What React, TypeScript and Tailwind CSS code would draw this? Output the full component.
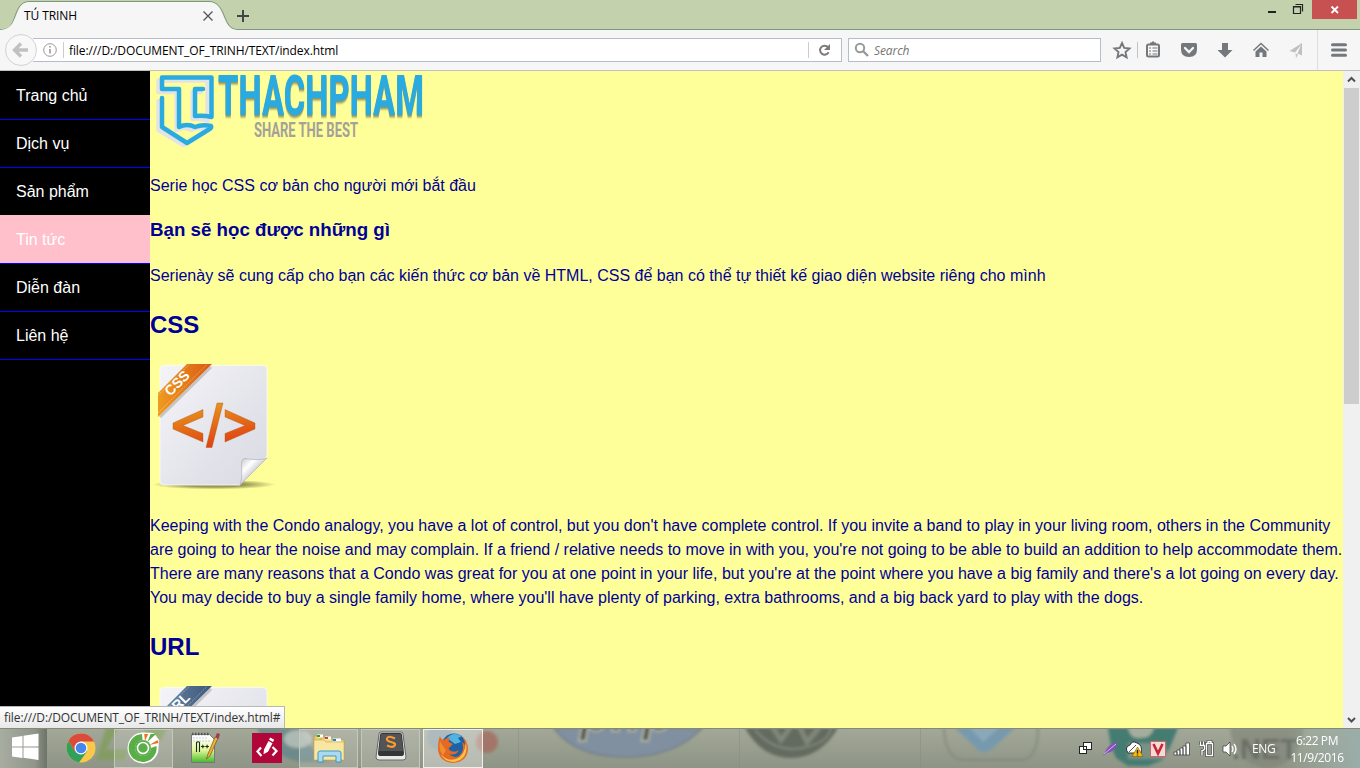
import React from "react";

const UI = "font-['Open_Sans','Noto_Sans',sans-serif]";

function TabStrip() {
  return (
    <div className="relative h-[30px] bg-[#c4d1ad] flex">
      <svg className="absolute inset-0" width="1360" height="30" viewBox="0 0 1360 30">
        <path d="M0 29.5H3C18 29 12 2 29 1.5H209C227 2 222 29 237 29.5H1360" fill="none" stroke="#7f9680" />
        <path d="M0 30C20 29.5 13 2.5 29 2H209C226 2.500 221 29.500 237 30Z" fill="#f6f6f6" />
        <path d="M203.500 11.500l9 9M212.500 11.500l-9 9" stroke="#555" strokeWidth="1.3" />
        <path d="M237 16h12M243 10v12" stroke="#444" strokeWidth="2" />
        <rect x="1268" y="11" width="8" height="2" fill="#222" />
        <path d="M1293.500 6.500h7v7h-7zM1293 7h8M1295.500 4.500h7v7" fill="none" stroke="#222" strokeWidth="1.200" />
        <rect x="1312" y="0" width="45" height="19" fill="#c75050" />
        <path d="M1331.500 6.500l6.500 6.500M1338 6.500l-6.500 6.500" stroke="#fff" strokeWidth="1.800" />
      </svg>
      <span className={"relative pl-6 pt-[7px] text-[12px] leading-[18px] tracking-[-0.1px] text-black whitespace-nowrap " + UI}>TÚ TRINH</span>
    </div>
  );
}

function ToolbarIcons() {
  return (
    <svg width="259" height="40" viewBox="1101 30 259 40" className="shrink-0">
      <path d="M1122 43l2.200 4.900 5.300.6-4 3.600 1.100 5.300-4.600-2.700-4.600 2.700 1.100-5.300-4-3.600 5.300-.6z" fill="none" stroke="#74787c" strokeWidth="1.900" />
      <path d="M1137.500 42v16" stroke="#c4c4c4" />
      <path d="M1148.500 44.500h9q1.500 0 1.500 1.500v9q0 1.500-1.500 1.500h-9q-1.500 0-1.500-1.500v-9q0-1.500 1.500-1.500z" fill="none" stroke="#74787c" strokeWidth="2" />
      <path d="M1150 44v-1.500h1.500l1.500-1.500 1.500 1.500h1.500V44z" fill="#74787c" />
      <path d="M1149 48h2M1152.500 48h5M1149 51h2M1152.500 51h5M1149 54h2M1152.500 54h5" stroke="#74787c" strokeWidth="1.200" />
      <path d="M1182.500 43h13q1.500 0 1.500 1.500v5q0 7.500-8 7.500t-8-7.500v-5q0-1.500 1.500-1.500z" fill="#74787c" />
      <path d="M1185 48l4 4 4-4" fill="none" stroke="#f6f6f6" strokeWidth="2.300" strokeLinecap="round" />
      <path d="M1222 43h6v7h4.500l-7.500 7.500-7.500-7.500h4.500z" fill="#74787c" />
      <path d="M1253.500 50.500l7.500-7 7.500 7" fill="none" stroke="#74787c" strokeWidth="1.500" />
      <path d="M1261 46.500l5.500 5v5.500h-4v-4.500h-3v4.500h-4v-5.500z" fill="#74787c" />
      <path d="M1302 43v12.500l-4.500-2L1301 45l-6 7.500-5.500-1.500zM1295.500 53.500l2.500 1-2 3.500z" fill="#bfc0c2" />
      <path d="M1317.500 30v40" stroke="#dedede" />
      <path d="M1332.500 44.800h13M1332.500 50h13M1332.500 55.200h13" stroke="#74787c" strokeWidth="3" strokeLinecap="round" />
    </svg>
  );
}

function Toolbar() {
  return (
    <div className="h-[41px] bg-[#f6f6f6] border-b border-[#c1c1c1] flex items-center">
      <svg width="38" height="40" viewBox="0 30 38 40" className="relative z-10 -mr-[5px] shrink-0">
        <circle cx="21" cy="50" r="15.500" fill="#f8f8f8" stroke="#d3d3d6" />
        <path d="M28 50H16M21 43.500l-6.500 6.500 6.500 6.500" fill="none" stroke="#c1c1c3" strokeWidth="3.400" />
      </svg>
      <div className="w-[809px] h-6 bg-white border border-[#b5bdc9] border-l-0 flex items-center shrink-0">
        <svg width="36" height="22" viewBox="33 39 36 22" className="shrink-0">
          <circle cx="50" cy="50" r="6.300" fill="none" stroke="#999" />
          <path d="M50 49v4.500M50 46v1.600" stroke="#999" strokeWidth="1.600" />
          <path d="M63.500 42v16" stroke="#ccc" />
        </svg>
        <span className={"text-[12px] leading-[18px] w-[739px] pt-px tracking-[-0.1px] text-black whitespace-nowrap " + UI}>file:///D:/DOCUMENT_OF_TRINH/TEXT/index.html</span>
        <svg width="33" height="22" viewBox="808 39 33 22" className="shrink-0">
          <path d="M808.500 42v16" stroke="#ccc" />
          <path d="M828 47.200a4.500 4.500 0 1 0 .6 5" fill="none" stroke="#7b7b7b" strokeWidth="2" />
          <path d="M830 44v6h-6z" fill="#7b7b7b" />
        </svg>
      </div>
      <div className="ml-1.5 w-[253px] h-6 bg-white border border-[#b5bdc9] flex items-center shrink-0">
        <svg width="25" height="22" viewBox="849 39 25 22" className="shrink-0">
          <circle cx="860" cy="48" r="4.200" fill="none" stroke="#999" strokeWidth="2" />
          <path d="M863 51l5 5" stroke="#999" strokeWidth="2.400" />
        </svg>
        <span className={"text-[12px] leading-[18px] pt-px italic text-[#757575] tracking-[-0.1px] " + UI}>Search</span>
      </div>
      <ToolbarIcons />
    </div>
  );
}

const MENU = ["Trang chủ", "Dịch vụ", "Sản phẩm", "Tin tức", "Diễn đàn", "Liên hệ"];

function Sidebar() {
  return (
    <ul className="w-[150px] bg-black shrink-0 text-white text-[16px]">
      {MENU.map((m, i) => (
        <li
          key={m}
          className={
            i === 3
              ? "h-[49px] -mt-px pt-px border-b border-[#0000ff] bg-[#ffc0cb] pl-4 leading-[48px]"
              : i === 0
                ? "h-[49px] border-b border-[#0000ff] pl-4 leading-[49px]"
                : "h-12 border-b border-[#0000ff] pl-4 leading-[48px]"
          }
        >
          {m}
        </li>
      ))}
    </ul>
  );
}

function Logo() {
  return (
    <svg width="290" height="79" viewBox="150 71 290 79" className="block">
      <g fill="none" strokeLinejoin="round" strokeLinecap="round" strokeWidth="4.500">
        <path d="M204 89H196V116Q204 115 211 118V77.500H162V89H180V127Q187 123 195 127 202 123 211 127L187 142 162 127V98" stroke="#e3e3e3" transform="translate(-3.500 3)" />
        <path d="M203 89H195V116Q204 115 211.500 117V77.500H162V89H179V127Q187 123 195 127 202 124 211 126 212 128 208 130L187 143 162 127V98" stroke="#29abe2" />
      </g>
      <g fontFamily="Roboto, 'Liberation Sans', sans-serif">
        <text className="[filter:drop-shadow(0px_1px_0.5px_rgba(110,110,70,0.75))]" transform="translate(218 114.500) scale(1 2.300)" fontSize="24" fontWeight="800" textLength="206" lengthAdjust="spacingAndGlyphs" fill="#29abe2">THACHPHAM</text>
        <text x="254" y="137" fontSize="21" fontWeight="700" textLength="104" lengthAdjust="spacingAndGlyphs" fill="#a5a19a">SHARE THE BEST</text>
      </g>
    </svg>
  );
}

function FileIcon({ id, label, from, to, code }: { id: string; label: string; from: string; to: string; code?: boolean }) {
  return (
    <svg width="128" height="128" viewBox="0 0 128 128" className="block">
      <defs>
        <linearGradient id={id + "p"} x1="0" y1="0" x2="1" y2="1">
          <stop offset="0" stopColor="#f4f4f8" />
          <stop offset="1" stopColor="#d8d9e2" />
        </linearGradient>
        <linearGradient id={id + "r"} x1="0" y1="0" x2="1" y2="0">
          <stop offset="0" stopColor={from} />
          <stop offset="1" stopColor={to} />
        </linearGradient>
        <linearGradient id={id + "c"} x1="0" y1="0" x2=".3" y2="1">
          <stop offset="0" stopColor="#eaa11d" />
          <stop offset="1" stopColor="#e04412" />
        </linearGradient>
        <linearGradient id={id + "f"} x1="0" y1="0" x2="1" y2="1">
          <stop offset="0" stopColor="#bfc0c6" />
          <stop offset=".3" stopColor="#ffffff" />
          <stop offset=".55" stopColor="#c9cad0" />
        </linearGradient>
        <radialGradient id={id + "s"}>
          <stop offset=".5" stopColor="#77773c" stopOpacity=".75" />
          <stop offset="1" stopColor="#77773c" stopOpacity="0" />
        </radialGradient>
      </defs>
      <ellipse cx="64" cy="122.500" rx="62" ry="5" fill={`url(#${id}s)`} />
      <path d="M14 3.500H113Q117 3.500 117 7.500V94L90 123H14Q10 123 10 119V7.500Q10 3.500 14 3.500Z" fill={`url(#${id}p)`} stroke="#fafaff" strokeWidth=".8" />
      <path d="M117 96Q110 99 95 96.500 91 96.500 91.500 104 92.500 117 90 123Z" fill={`url(#${id}f)`} stroke="#aaaab2" strokeWidth=".6" />
      <path d="M10 55L61 5" stroke="#888" strokeOpacity=".4" strokeWidth="3" />
      <path d="M8 31L37 2H62L8 55Z" fill={`url(#${id}r)`} />
      <path d="M8 33.500L39 2.500M8 51L57 2.500" stroke="#fff" strokeOpacity=".45" strokeWidth=".8" strokeDasharray="2 1" />
      <text x="0" y="5" transform="translate(27 21) rotate(-45)" textAnchor="middle" fontFamily="Liberation Sans, sans-serif" fontWeight="700" fontSize="14" fill="#fff">{label}</text>
      {code && (
        <path d="M53 47.500V55L33 63.500 53 71.500V80L23 67V61ZM75 47.500V55L95 63.500 75 71.500V80L105 67V61ZM67 41H73L62 85.500H56Z" fill={`url(#${id}c)`} stroke="#a95b1b" strokeWidth=".4" />
      )}
    </svg>
  );
}

function Content() {
  return (
    <main className="w-[1193px] shrink-0 bg-[#ffff99] text-[#000099] text-[16px] leading-6 overflow-hidden whitespace-nowrap">
      <Logo />
      <p className="mt-6">Serie học CSS cơ bản cho người mới bắt đầu</p>
      <h3 className="mt-[18px] text-[18.72px] leading-[28px] font-bold">Bạn sẽ học được những gì</h3>
      <p className="mt-5">Serienày sẽ cung cấp cho bạn các kiến thức cơ bản về HTML, CSS để bạn có thể tự thiết kế giao diện website riêng cho mình</p>
      <h2 className="mt-[19px] text-[24px] leading-9 font-bold">CSS</h2>
      <div className="mt-[19px]"><FileIcon id="css" label="CSS" from="#ee9b20" to="#d95a12" code /></div>
      <p className="mt-6">
        Keeping with the Condo analogy, you have a lot of control, but you don't have complete control. If you invite a band to play in your living room, others in the Community<br />
        are going to hear the noise and may complain. If a friend / relative needs to move in with you, you're not going to be able to build an addition to help accommodate them.<br />
        There are many reasons that a Condo was great for you at one point in your life, but you're at the point where you have a big family and there's a lot going on every day.<br />
        You may decide to buy a single family home, where you'll have plenty of parking, extra bathrooms, and a big back yard to play with the dogs.
      </p>
      <h2 className="mt-[19px] text-[24px] leading-9 font-bold">URL</h2>
      <div className="mt-[19px]"><FileIcon id="url" label="URL" from="#6a86a8" to="#3d5878" /></div>
    </main>
  );
}

function Scrollbar() {
  return (
    <div className="w-[17px] bg-[#f0f0f0] flex flex-col items-center shrink-0">
      <svg width="17" height="17" viewBox="0 0 17 17"><path d="M5 10.500l3.500-3.500 3.500 3.500" fill="none" stroke="#505050" strokeWidth="2" /></svg>
      <div className="w-[15px] h-[316px] bg-[#cdcdcd]" />
      <svg className="mt-auto" width="17" height="17" viewBox="0 0 17 17"><path d="M5 7l3.500 3.500L12 7" fill="none" stroke="#505050" strokeWidth="2" /></svg>
    </div>
  );
}

function TaskbarBackdrop() {
  return (
    <svg className="absolute inset-0" width="1360" height="40" viewBox="0 728 1360 40">
      <defs>
        <linearGradient id="tb" x1="0" y1="0" x2="0" y2="1">
          <stop offset="0" stopColor="#a3a898" />
          <stop offset="1" stopColor="#8f9586" />
        </linearGradient>
        <linearGradient id="tl" x1="0" y1="0" x2="1" y2="0">
          <stop offset="0" stopColor="#a8ada1" />
          <stop offset=".75" stopColor="#8f9588" />
          <stop offset="1" stopColor="#6d7368" />
        </linearGradient>
        <linearGradient id="tr" x1="0" y1="0" x2="1" y2="0">
          <stop offset="0" stopColor="#9fb0a8" stopOpacity="0" />
          <stop offset="1" stopColor="#9aada8" />
        </linearGradient>
        <filter id="bl"><feGaussianBlur stdDeviation="1.500" /></filter>
      </defs>
      <rect y="728" width="1360" height="40" fill="url(#tb)" />
      <rect y="728" width="47" height="40" fill="url(#tl)" />
      <g filter="url(#bl)">
        <path d="M106 728h12l-12 22 22 0-4 10-28 0zM145 728h22l-6 12-16 6z" fill="#7c9c52" opacity=".7" />
        <path d="M257 728h45q4 20 28 34h-30q-34-8-43-34z" fill="#577f8b" opacity=".65" />
        <ellipse cx="298" cy="739" rx="14" ry="9" fill="#bdc5bd" opacity=".8" />
        <circle cx="440" cy="737" r="13" fill="#788f98" opacity=".7" />
        <circle cx="487" cy="742" r="11" fill="#a5675c" opacity=".75" />
        <path d="M554 728Q575 757 625 757T702 728Z" fill="#8190a0" stroke="#6f7d88" strokeWidth="1.500" />
        <text x="580" y="731" fontFamily="Liberation Sans, sans-serif" fontStyle="italic" fontWeight="700" fontSize="48" textLength="92" fill="#4f544a" stroke="#afb4a5" strokeWidth="2">php</text>
        <path d="M745 728Q762 758 791 758T838 728Z" fill="#636b5f" />
        <path d="M773 728l8 12 9-12M800 728l7 14 12-14" fill="none" stroke="#7f8779" strokeWidth="5" />
        <path d="M755 730Q775 753 802 748T831 728" fill="none" stroke="#899083" strokeWidth="1.500" />
        <path d="M955 728h60l-22 20q-10 9-17 0z" fill="#7799ae" />
        <path d="M970 728l13 14 16-14" fill="#8aa8b8" />
        <path d="M944 728Q945 760 965 760H1020Q1038 760 1038 728" fill="none" stroke="#7e877c" strokeWidth="1.500" />
        <path d="M1108 728h70l-7 17-8 15-15 6h-20l-12-8-5-12z" fill="#447c72" />
        <path d="M1128 728h26q-2 10-14 10-10 1-12-10z" fill="#a5ae9e" />
        <path d="M1128 743h38v16h-38z" fill="#8b9a8b" opacity=".75" />
        <path d="M1230 728h74q-6 40-38 40-32-4-36-40z" fill="#7d8277" opacity=".6" />
        <text x="1232" y="759" fontFamily="Liberation Sans, sans-serif" fontWeight="700" fontSize="29" fill="#696f65">.NET</text>
      </g>
      <path d="M739.500 728v40M920.500 728v40M518.500 728v40" stroke="#81887a" strokeOpacity=".4" />
      <rect x="1285" y="728" width="75" height="40" fill="url(#tr)" />
      <path d="M0 728.500H1360" stroke="#858a78" />
    </svg>
  );
}

const BTN = "w-[59px] h-[39px] mt-px flex items-center justify-center border border-[#c3c8bd] bg-white/15 shrink-0";

function Taskbar() {
  return (
    <footer className="relative h-10 overflow-hidden">
      <TaskbarBackdrop />
      <div className={"relative h-10 flex items-center text-white " + UI}>
        <svg width="114" height="40" viewBox="0 728 114 40" className="shrink-0">
          <path d="M12 737.500l10.500-1.500v10.500H12zM23.500 735.800l15-2.300v13h-15zM12 747.500h10.500v10.500l-10.500-1.500zM23.500 747.500h15v12.500l-15-2.200z" fill="#fff" />
          <circle cx="81" cy="748" r="14.500" fill="#fbc94a" />
          <path d="M68.500 740.700A14.500 14.500 0 0 0 79 762.400L87 751.500 81 748 75 751.500Z" fill="#32a05a" />
          <path d="M68.500 740.700A14.500 14.500 0 0 1 94.100 741.500H81L75 751.500Z" fill="#da4b3c" />
          <circle cx="81" cy="748" r="6.500" fill="#fff" /><circle cx="81" cy="748" r="5.300" fill="#4686ee" />
        </svg>
        <div className={BTN}>
          <svg width="32" height="32" viewBox="0 0 32 32" className="-mt-px -ml-px">
            <path d="M17 .500A15.500 15.500 0 1 0 31.500 15L32 8 27 1Z" fill="#fff" />
            <path d="M15 2A14 14 0 1 0 29.500 14L24 16A8 8 0 1 1 15.500 8Z" fill="#59ae48" />
            <circle cx="16" cy="16" r="8" fill="#59ae48" />
            <circle cx="16" cy="16" r="5.500" fill="#59ae48" stroke="#fff" strokeWidth="1.600" />
            <path d="M18 9l-.8-7h4z" fill="#f07024" />
            <path d="M20.500 10l3-8 6-.5z" fill="#59ae48" />
            <path d="M22.500 13l8-5 1 3z" fill="#f07024" />
          </svg>
        </div>
        <svg width="126" height="40" viewBox="173 728 126 40" className="shrink-0">
          <defs><linearGradient id="npg" x1="0" y1="0" x2="0" y2="1"><stop offset=".1" stopColor="#fff" /><stop offset=".55" stopColor="#e5f79b" /><stop offset="1" stopColor="#42ba29" /></linearGradient></defs>
          <path d="M191.500 734.500h18l5 5v23h-23z" fill="url(#npg)" stroke="#777" />
          <path d="M192 734h17" stroke="#555" strokeWidth="2.500" strokeDasharray="1.500 1.500" />
          <path d="M193 738h15M193 741h18" stroke="#c5d0d8" strokeDasharray="2 1" />
          <path d="M196.500 752v-9.500q2-1.500 3 0v9.500M201 746.500h3.600M202.800 744.700v3.600M205.300 746.500h3.600M207.100 744.700v3.600" fill="none" stroke="#182d18" strokeWidth="1.100" />
          <path d="M206.500 759l1.500-5 7-17 3 1-8 18z" fill="#ecb13b" stroke="#775221" strokeWidth=".7" />
          <path d="M215.500 737l1.500-4 3 1-1.500 5z" fill="#a33c48" />
          <rect x="252" y="733" width="30" height="30" fill="#b0063a" />
          <path d="M261 747.500l-3.500 4 4 4.500M272.500 747l4 4-4 4.500" fill="none" stroke="#fff" strokeWidth="2.200" />
          <path d="M264 749.500l4.500-8.500 4 2.200-4.500 8.500-4.500 2.500zM269 739.800l1.200-2.300 4 2.200-1.200 2.300z" fill="#fff" />
        </svg>
        <div className={BTN}>
          <svg width="34" height="32" viewBox="0 0 34 32" className="-mt-0.5">
            <path d="M2 4h9l2 2h8v22H2z" fill="#eacb67" stroke="#b69843" strokeWidth=".6" />
            <path d="M9 6h9l2 2h12v20H9z" fill="#f2db88" stroke="#b69843" strokeWidth=".6" />
            <path d="M5 4h6M13 6h6M21 8h8" stroke="#fff" strokeWidth="3" />
            <path d="M5 4h3" stroke="#2e9f32" strokeWidth="2" /><path d="M13 6h3" stroke="#d5442f" strokeWidth="2" /><path d="M21 8h3" stroke="#2481bd" strokeWidth="2" />
            <path d="M2 8h10l2 2h18v18H2z" fill="#f9e6a0" stroke="#c7aa55" strokeWidth=".6" />
            <path d="M6 30V21q0-2 2-2h19q2 0 2 2v9h-5v-6H11v6z" fill="#a9daf1" stroke="#3c98c6" />
          </svg>
        </div>
        <div className={BTN + " ml-[3px]"}>
          <svg width="32" height="32" viewBox="0 0 32 32" className="-mt-1">
            <path d="M4 3Q4 1 6 1H26Q28 1 28 3L31 26Q31 29 28 29H4Q1 29 1 26Z" fill="#e9e9e8" stroke="#666" />
            <path d="M5 4Q5 2 7 2H25Q27 2 27 4L29 22Q29 25 27 25H5Q3 25 3 22Z" fill="#343536" />
            <path d="M6 3H26L28 20H4Z" fill="#535455" />
            <path d="M20 7.500Q13 4 12 7.500 11.500 10 16 11 20.500 12 20 14 18.500 17.500 12 14.500" fill="none" stroke="#f99a34" strokeWidth="2.200" />
          </svg>
        </div>
        <div className="w-[60px] h-[39px] mt-px ml-[3px] flex items-center justify-center border border-[#eef0ea] bg-white/35 shrink-0">
          <svg width="32" height="32" viewBox="0 0 32 32" className="-mt-px">
            <circle cx="17" cy="14" r="12.500" fill="#1c62a5" />
            <path d="M10 6Q16-1 25 4L21 6 24 10 18 12Z" fill="#52b3df" />
            <path d="M3 4Q4 8 7 8 10 5 13 6 11 9 12 10L16 12 13 15Q10 17 14 19 18 21 22 18 19 24 12 22 20 29 25 20 27 16 25 10 28 12 28 14 28 7 24 4 31 8 31 17 30 30 16 31 2 30 1 17 1 9 3 4Z" fill="#e36924" />
            <path d="M29 10Q32 27 17 30 6 29 4 22 10 30 19 27 28 24 29 10Z" fill="#fbc54a" />
            <path d="M3 9Q1 18 6 23L9 18 6 14Z" fill="#f28e2d" />
          </svg>
        </div>
        <svg width="162" height="40" viewBox="1078 728 162 40" className="ml-[595px] shrink-0">
          <g fill="#fff" stroke="#222"><rect x="1083.500" y="742.500" width="8" height="7" /><rect x="1079.500" y="746.500" width="7" height="7" /><rect x="1083.500" y="746.500" width="3" height="3" /></g>
          <path d="M1103 756l3-6Q1109 744 1118 742 1115 752 1107 753Z" fill="#8452b5" /><path d="M1104 754l12-10" stroke="#d2b5ed" />
          <path d="M1128 753Q1124 747 1130 745 1132 740 1137 743 1143 745 1141 753Z" fill="#fff" stroke="#333" />
          <path d="M1129 752l7-7" stroke="#555" />
          <path d="M1137.500 747l5.500 9.500h-11z" fill="#ffb900" stroke="#795c13" strokeWidth=".6" /><path d="M1137.500 750v3.500M1137.500 754.500v1" stroke="#222" strokeWidth="1.400" />
          <rect x="1150.500" y="741.500" width="15" height="15" fill="#f5dada" stroke="#d26565" />
          <path d="M1153.500 744l4.500 9.500 4.500-9.500" fill="none" stroke="#c62631" strokeWidth="2.600" />
          <g fill="#fff" stroke="#333" strokeWidth=".7"><path d="M1174 752h3v3h-3zM1177 750h3v5h-3zM1180 748h3v7h-3zM1183 746h3v9h-3zM1186 743h3.500v12h-3.500z" /></g>
          <path d="M1206.500 743.500h6v12h-6zM1208 743v-1.500h3v1.500M1199.500 745.500h5v3q0 2-2.500 2v5M1200.500 741.500v4M1203.500 741.500v4" fill="none" stroke="#333" strokeWidth="2.600" />
          <path d="M1206.500 743.500h6v12h-6zM1208 743v-1.500h3v1.500M1199.500 745.500h5v3q0 2-2.500 2v5M1200.500 741.500v4M1203.500 741.500v4" fill="none" stroke="#fff" strokeWidth="1.400" />
          <path d="M1223 746h3l4-4v14l-4-4h-3z" fill="#fff" stroke="#333" strokeWidth=".7" />
          <path d="M1232 746q2 3 0 6M1234 744q4 5 0 10" fill="none" stroke="#fff" strokeWidth="1.300" />
        </svg>
        <span className="ml-[12px] w-[30px] text-[12px] mt-0.5 tracking-[-0.4px]">ENG</span>
        <div className="ml-[5px] w-[60px] text-center text-[12px] leading-[17px] mt-px tracking-[-0.4px] whitespace-nowrap">6:22 PM<br />11/9/2016</div>
      </div>
    </footer>
  );
}

export default function App() {
  return (
    <div className="relative w-[1360px] h-[768px] overflow-hidden flex flex-col font-['Liberation_Sans',sans-serif]">
      <TabStrip />
      <Toolbar />
      <div className="h-[657px] flex overflow-hidden">
        <Sidebar />
        <Content />
        <Scrollbar />
      </div>
      <Taskbar />
      <div className={"absolute left-0 top-[706px] w-[285px] h-[22px] pl-1 text-[12px] leading-[21px] tracking-[-0.11px] text-[#333] whitespace-nowrap border-t border-r border-[#b8b8b8] bg-linear-to-b from-white to-[#e8e8e8] " + UI}>
        file:///D:/DOCUMENT_OF_TRINH/TEXT/index.html#
      </div>
    </div>
  );
}
